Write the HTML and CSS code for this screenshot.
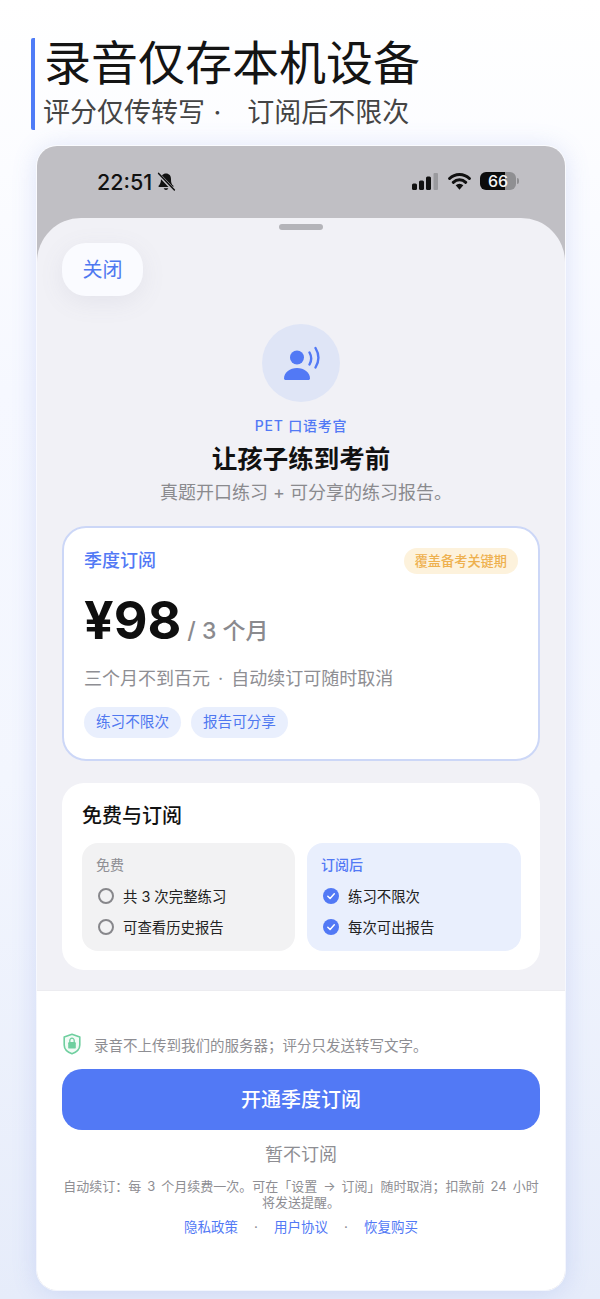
FILE: index.html
```html
<!DOCTYPE html>
<html lang="zh-CN">
<head>
<meta charset="utf-8">
<title>录音仅存本机设备</title>
<link rel="stylesheet" href="styles.css">
</head>
<body>
<header class="hero">
  <h1 class="hero-title">录音仅存本机设备</h1>
  <p class="hero-sub">评分仅传转写 ·&nbsp;&nbsp; 订阅后不限次</p>
</header>
<main class="phone">
  <div class="status">
    <div class="status-left">
      <span class="clock">22:51</span>
      <svg class="bell" viewBox="0 0 20 20" width="20" height="20"><path d="M10 1.600c-3.200 0-5 2.400-5 5.400 0 3.600-1.100 5.400-2.400 6.800-.4.5-.1 1.200.6 1.200h13.600c.7 0 1-.7.6-1.200C15.500 12.400 15 10.600 15 7c0-3-1.800-5.400-5-5.400z" fill="#111"/><path d="M7.700 16.200a2.400 2.400 0 0 0 4.600 0z" fill="#111"/><path d="M2.200 1.800 17.800 18.200" stroke="#c0bfc4" stroke-width="3.400"/><path d="M2.600 1.400 18.400 18" stroke="#111" stroke-width="1.500" stroke-linecap="round"/></svg>
    </div>
    <div class="status-right">
      <svg class="signal" viewBox="0 0 26 17" width="26" height="17"><rect x="0" y="10.500" width="5" height="6.500" rx="1.500" fill="#111"/><rect x="7" y="7.500" width="5" height="9.500" rx="1.500" fill="#111"/><rect x="14" y="3.500" width="5" height="13.500" rx="1.500" fill="#111"/><rect x="21.500" y="0" width="4.500" height="17" rx="1" fill="#9a9a9e"/></svg>
      <svg class="wifi" viewBox="0 0 23 18" width="23" height="18"><path d="M1.600 6.500a14 14 0 0 1 19.800 0M5.300 10.300a9 9 0 0 1 12.400 0" fill="none" stroke="#111" stroke-width="3" stroke-linecap="round"/><path d="M7.700 13.300a5.500 5.500 0 0 1 7.600 0l-3.800 4.400z" fill="#111"/></svg>
      <div class="battery"><div class="battery-body"><span class="battery-text">66</span></div><span class="battery-nub"></span></div>
    </div>
  </div>
  <section class="sheet">
    <div class="handle"></div>
    <div class="content">
      <button class="close">关闭</button>
      <div class="avatar">
        <svg viewBox="0 0 40 36" width="40" height="36"><circle cx="16" cy="12.500" r="7" fill="#5279f5"/><path d="M3 33.500c0-6 6-10.500 13-10.500s13 4.500 13 10.500c0 .8-.8 1.500-1.500 1.500h-23C3.800 35 3 34.300 3 33.500z" fill="#5279f5"/><path d="M28.500 7.500c2 3.500 2 8.500 0 12M34.500 3c3.600 6 3.600 13.500 0 19.500" fill="none" stroke="#5279f5" stroke-width="2.400" stroke-linecap="round"/></svg>
      </div>
      <p class="eyebrow">PET 口语考官</p>
      <h2 class="headline">让孩子练到考前</h2>
      <p class="lead">真题开口练习 + 可分享的练习报告。</p>

      <div class="plan">
        <div class="plan-top">
          <span class="plan-name">季度订阅</span>
          <span class="plan-badge">覆盖备考关键期</span>
        </div>
        <div class="price-row">
          <span class="price">¥98</span>
          <span class="period">/ 3 个月</span>
        </div>
        <p class="plan-desc">三个月不到百元 · 自动续订可随时取消</p>
        <div class="pills">
          <span class="pill">练习不限次</span>
          <span class="pill">报告可分享</span>
        </div>
      </div>

      <div class="compare">
        <h3 class="compare-title">免费与订阅</h3>
        <div class="compare-grid">
          <div class="col col-free">
            <div class="col-label">免费</div>
            <div class="item"><span class="ring"></span>共 3 次完整练习</div>
            <div class="item"><span class="ring"></span>可查看历史报告</div>
          </div>
          <div class="col col-paid">
            <div class="col-label col-label-paid">订阅后</div>
            <div class="item"><svg class="tick" viewBox="0 0 16 16" width="16" height="16"><circle cx="8" cy="8" r="8" fill="#5279f5"/><path d="M4.800 8.200 7.100 10.500 11.300 5.800" fill="none" stroke="#fff" stroke-width="1.500" stroke-linecap="round" stroke-linejoin="round"/></svg>练习不限次</div>
            <div class="item"><svg class="tick" viewBox="0 0 16 16" width="16" height="16"><circle cx="8" cy="8" r="8" fill="#5279f5"/><path d="M4.800 8.200 7.100 10.500 11.300 5.800" fill="none" stroke="#fff" stroke-width="1.500" stroke-linecap="round" stroke-linejoin="round"/></svg>每次可出报告</div>
          </div>
        </div>
      </div>
    </div>

    <footer class="footer">
      <div class="privacy">
        <svg viewBox="0 0 18 22" width="18" height="22"><path d="M9 1.200 16.800 4v8c0 4.200-3.400 7.200-7.800 8.800C4.600 19.200 1.200 16.200 1.200 12V4z" fill="#f2fbf6" stroke="#6fcf9f" stroke-width="1.600" stroke-linejoin="round"/><rect x="5.200" y="9" width="7.600" height="6.600" rx="1.200" fill="#6fcf9f"/><path d="M6.800 9V7.400a2.200 2.200 0 0 1 4.400 0V9" fill="none" stroke="#6fcf9f" stroke-width="1.300"/></svg>
        <span>录音不上传到我们的服务器；评分只发送转写文字。</span>
      </div>
      <button class="cta">开通季度订阅</button>
      <div class="later">暂不订阅</div>
      <p class="terms">自动续订：每 3 个月续费一次。可在「设置 → 订阅」随时取消；扣款前 24 小时将发送提醒。</p>
      <nav class="links">
        <a class="link">隐私政策</a><span class="dot">·</span><a class="link">用户协议</a><span class="dot">·</span><a class="link">恢复购买</a>
      </nav>
    </footer>
  </section>
</main>
</body>
</html>
```
FILE: styles.css
```css
* { box-sizing: border-box; }
html, body { margin: 0; padding: 0; }
body {
  width: 600px;
  height: 1299px;
  overflow: hidden;
  padding-top: 38px;
  font-family: Inter, "Noto Sans CJK SC", sans-serif;
  background: linear-gradient(180deg, #ffffff 0%, #f6f8ff 30%, #f3f6fe 60%, #e6ecfa 100%);
  color: #111;
}
.hero {
  margin-left: 31px;
  height: 92px;
  border-left: 4px solid #4f7cf7;
  border-radius: 2px;
  padding-left: 9px;
}
.hero-title {
  margin: 0;
  font-size: 47px;
  line-height: 50px;
  font-weight: 400;
  color: #141414;
}
.hero-sub {
  margin: 6px 0 0 -1px;
  font-size: 27px;
  line-height: 38px;
  color: #444;
  white-space: pre;
  word-spacing: 1px;
}
.phone {
  margin: 16px 0 0 37px;
  width: 528px;
  height: 1144px;
  border-radius: 20px;
  background: #c0bfc4;
  box-shadow: 0 0 0 1px rgba(255,255,255,.7), 0 2px 26px rgba(90,120,220,.2);
  display: flex;
  flex-direction: column;
  overflow: hidden;
}
.status {
  height: 72px;
  flex: none;
  display: flex;
  justify-content: space-between;
  padding: 22px 46px 0 60px;
}
.status-left { display: flex; align-items: flex-start; gap: 4px; }
.clock { font-size: 21.500px; line-height: 28px; font-weight: 500; color: #111; }
.bell { margin-top: 4px; }
.status-right { display: flex; align-items: flex-start; gap: 10px; padding-top: 4px; }
.signal { margin-top: 1px; }
.battery { display: flex; align-items: center; gap: 1px; height: 18px; margin-left: -1px; }
.battery-body {
  width: 36px;
  height: 18px;
  border-radius: 6px;
  background: linear-gradient(90deg, #0c0c0c 0 70%, #8f8f92 70% 100%);
  display: flex;
  align-items: center;
  justify-content: center;
}
.battery-text { font-size: 16px; line-height: 18px; font-weight: 500; color: #f4f4f4; }
.battery-nub { width: 2px; height: 6px; border-radius: 0 2px 2px 0; background: #8f8f92; }
.sheet {
  flex: 1;
  background: #f1f1f6;
  border-radius: 44px 44px 0 0;
  display: flex;
  flex-direction: column;
  min-height: 0;
}
.handle {
  flex: none;
  width: 44px;
  height: 6px;
  margin: 6px auto 0;
  border-radius: 3px;
  background: #b4b4b9;
}
.content {
  flex: 1;
  padding: 13px 25px 0;
  display: flex;
  flex-direction: column;
  align-items: center;
}
.close {
  align-self: flex-start;
  width: 81px;
  height: 53px;
  border: 0;
  border-radius: 24px;
  background: #fafbff;
  box-shadow: 0 6px 24px rgba(120,120,150,.1);
  font: 400 20px/28px Inter, "Noto Sans CJK SC", sans-serif;
  color: #4f78f0;
  padding: 0;
}
.avatar {
  margin-top: 28px;
  width: 78px;
  height: 78px;
  border-radius: 50%;
  background: #dfe5f6;
  display: flex;
  align-items: center;
  justify-content: center;
}
.eyebrow {
  margin: 14px 0 0;
  font-size: 14px;
  line-height: 20px;
  letter-spacing: .8px;
  font-weight: 500;
  color: #5279f5;
}
.headline {
  margin: 6px 0 0;
  font-size: 25.500px;
  line-height: 34px;
  font-weight: 700;
  color: #111;
}
.lead {
  margin: 5px 0 0;
  padding-left: 10px;
  font-size: 18px;
  line-height: 24px;
  color: #8a8a8e;
}
.plan {
  align-self: stretch;
  margin-top: 21px;
  height: 235px;
  border: 2px solid #ccd7f7;
  border-radius: 24px;
  background: #fff;
  padding: 20px 20px 0;
}
.plan-top { display: flex; justify-content: space-between; align-items: center; height: 26px; }
.plan-name { font-size: 18px; line-height: 26px; font-weight: 500; color: #5279f5; }
.plan-badge {
  height: 26px;
  padding: 0 11px;
  border-radius: 13px;
  background: #fdf2dc;
  color: #eeb04e;
  font-size: 13.200px;
  line-height: 26px;
  font-weight: 500;
}
.price-row { display: flex; align-items: baseline; gap: 6px; margin-top: 12px; height: 70px; }
.price { font-size: 52px; line-height: 70px; font-weight: 700; color: #0f0f0f; }
.period { font-size: 23px; line-height: 32px; font-weight: 500; color: #8a8a8e; }
.plan-desc { margin: 11px 0 0; font-size: 18px; line-height: 24px; color: #8e8e93; word-spacing: 3px; }
.pills { display: flex; gap: 10px; margin-top: 16px; }
.pill {
  height: 31px;
  padding: 0 12px;
  border-radius: 16px;
  background: #e9effd;
  color: #4f78f0;
  font-size: 14.600px;
  line-height: 31px;
}
.compare {
  align-self: stretch;
  margin-top: 22px;
  height: 187px;
  border-radius: 22px;
  background: #fff;
  padding: 19px 19px 0 20px;
}
.compare-title { margin: 0; font-size: 20px; line-height: 28px; font-weight: 500; color: #111; }
.compare-grid { display: grid; grid-template-columns: 213px 214px; gap: 12px; margin-top: 13px; }
.col { height: 108px; border-radius: 16px; padding: 12px 14px 0 16px; }
.col-free { background: #f2f2f3; }
.col-paid { background: #e9effd; }
.col-label { font-size: 14px; line-height: 20px; color: #8e8e93; margin-left: -2px; margin-bottom: 5px; }
.col-label-paid { color: #5279f5; font-weight: 500; }
.item { display: flex; align-items: center; gap: 9px; height: 31px; font-size: 14.400px; color: #222; }
.ring { width: 16px; height: 16px; border: 2px solid #87878b; border-radius: 50%; flex: none; }
.tick { flex: none; width: 16px; height: 16px; }
.footer {
  flex: none;
  height: 300px;
  background: #fff;
  border-top: 1px solid #ececf0;
  padding: 42px 25px 0;
  display: flex;
  flex-direction: column;
  align-items: stretch;
}
.privacy { display: flex; align-items: center; gap: 13px; height: 22px; padding-left: 1px; font-size: 14.500px; color: #8e8e93; white-space: nowrap; }
.privacy svg { flex: none; }
.cta {
  margin-top: 14px;
  height: 61px;
  border: 0;
  border-radius: 20px;
  background: #5279f5;
  color: #fff;
  font: 500 20px/28px Inter, "Noto Sans CJK SC", sans-serif;
}
.later { margin-top: 12px; text-align: center; font-size: 18px; line-height: 26px; color: #8e8e93; }
.terms { margin: 10px 0 0; text-align: center; font-size: 13px; line-height: 16px; color: #8e8e93; word-spacing: 2.300px; }
.links { display: flex; justify-content: center; gap: 15px; margin-top: 7px; font-size: 13.500px; line-height: 20px; }
.link { color: #5279f5; }
.dot { color: #8e8e93; width: 6px; text-align: center; }
```
